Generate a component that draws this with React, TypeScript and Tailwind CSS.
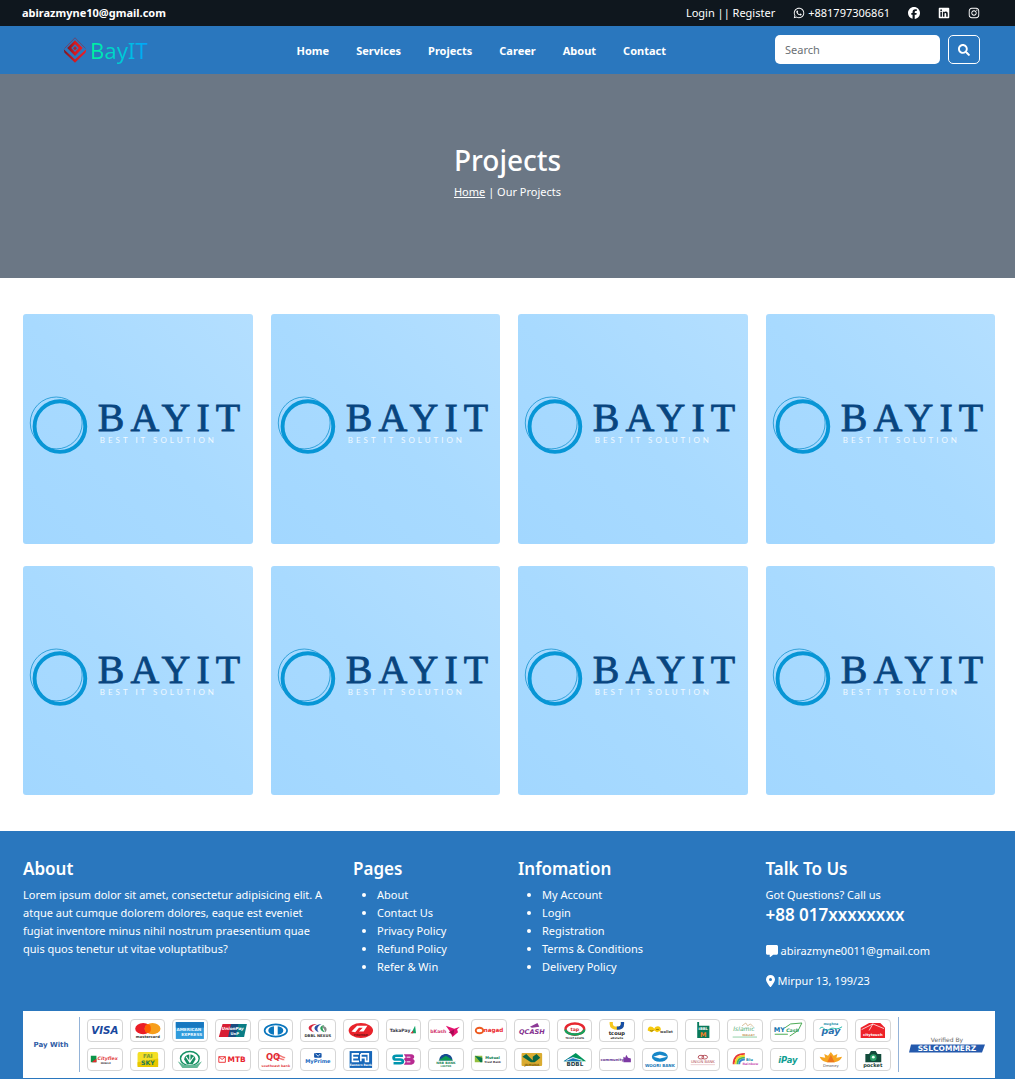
import React from "react";
import { FaInstagram, FaSearch, FaWhatsapp } from "react-icons/fa";
import { FaFacebook, FaLinkedin, FaLocationDot, FaMessage } from "react-icons/fa6";

const navItems = ["Home", "Services", "Projects", "Career", "About", "Contact"];
const pageLinks = ["About", "Contact Us", "Privacy Policy", "Refund Policy", "Refer & Win"];
const infoLinks = ["My Account", "Login", "Registration", "Terms & Conditions", "Delivery Policy"];

function TopBar() {
  return (
    <div className="flex h-[26px] items-center justify-between bg-[#0f171e] pr-[35px] pl-[22px] text-white">
      <a href="#mail" className="text-[11px] font-bold">
        abirazmyne10@gmail.com
      </a>
      <div className="flex items-center gap-[18px] text-[11px]">
        <span>
          <a href="#login">Login</a> || <a href="#register">Register</a>
        </span>
        <a href="#phone" className="flex items-center gap-[3px]">
          <FaWhatsapp className="size-3" />
          +881797306861
        </a>
        <a href="#facebook" aria-label="Facebook">
          <FaFacebook className="size-3" />
        </a>
        <a href="#linkedin" aria-label="LinkedIn">
          <FaLinkedin className="size-3" />
        </a>
        <a href="#instagram" aria-label="Instagram">
          <FaInstagram className="size-3" />
        </a>
      </div>
    </div>
  );
}

function BrandMark() {
  return (
    <svg viewBox="0 0 24 26" className="h-[26px] w-6">
      <defs>
        <linearGradient id="mark" x1="0" y1="0" x2="1" y2="0">
          <stop offset="0" stopColor="#7d1420" />
          <stop offset="0.5" stopColor="#d31b22" />
          <stop offset="1" stopColor="#ee1c24" />
        </linearGradient>
      </defs>
      <path d="M1.5 11.5 12 .8l10.500 10.700" fill="none" stroke="#7a3a5c" strokeWidth=".8" />
      <path d="M12 3.200 19.800 11 12 19 4.200 11Z M12 7.200 8.200 11 12 15 15.800 11Z" fill="url(#mark)" fillRule="evenodd" />
      <path d="M12 9.200 14 11.200 12 13.200 10 11.200Z" fill="#b81c2a" />
      <path d="M.8 12.200 12 22.500 23.200 12.200 22.600 15.600 12 25.800 1.400 15.600Z" fill="url(#mark)" />
    </svg>
  );
}

function NavBar() {
  return (
    <header className="flex h-12 items-center justify-between bg-[#2a77be] pr-[35px] pb-px pl-[63px] text-white">
      <a href="#home" className="flex items-center gap-[3px] pr-10">
        <BrandMark />
        <span className="bg-gradient-to-r from-[#00f59b] to-[#06a3fb] bg-clip-text text-[22px] leading-7 text-transparent">
          BayIT
        </span>
      </a>
      <nav className="flex gap-[27px] pt-[3px] text-[11px] font-bold">
        {navItems.map((item) => (
          <a key={item} href={"#" + item.toLowerCase()}>
            {item}
          </a>
        ))}
      </nav>
      <form className="flex gap-2" onSubmit={(e) => e.preventDefault()}>
        <input
          type="search"
          aria-label="Search"
          placeholder="Search"
          className="h-[29px] w-[165px] rounded-[5px] bg-white px-[10px] text-[11px] text-gray-800 placeholder:text-[#6a7075]"
        />
        <button
          type="submit"
          aria-label="Submit search"
          className="flex h-[29px] w-8 items-center justify-center rounded-[5px] border border-white"
        >
          <FaSearch className="size-3" />
        </button>
      </form>
    </header>
  );
}

function Hero() {
  return (
    <section className="flex h-[204px] items-center justify-center bg-[#6b7785] pb-[10px] text-white">
      <div className="text-center">
        <h1 className="text-[28px] leading-9 font-medium">Projects</h1>
        <p className="mt-[5px] text-[11px] leading-[18px]">
          <a href="#home" className="underline">
            Home
          </a>{" "}
          | Our Projects
        </p>
      </div>
    </section>
  );
}

function ProjectCard() {
  return (
    <a
      href="#project"
      aria-label="BAYIT project"
      className="block overflow-hidden rounded-[3px] bg-gradient-to-tr from-[#a2d7ff] via-[#a8daff] to-[#b4dfff]"
    >
      <svg viewBox="0 0 230 230" className="block h-auto w-full">
        <circle cx="37" cy="112.800" r="25.400" fill="none" stroke="#0796d6" strokeWidth="3.900" />
        <circle cx="33.300" cy="109.200" r="26" fill="none" stroke="#1593cf" strokeWidth=".8" />
        <text
          x="75"
          y="117"
          fontFamily="Liberation Serif, serif"
          fontSize="40"
          letterSpacing="6"
          fill="#08457f"
          stroke="#08457f"
          strokeWidth=".8"
        >
          BAYIT
        </text>
        <text x="77" y="129.500" fontFamily="Lato, sans-serif" fontSize="8" letterSpacing="3" fill="#f0f9ff">
          BEST IT SOLUTION
        </text>
      </svg>
    </a>
  );
}

type LabelProps = {
  x?: number;
  y: number;
  size: number;
  fill: string;
  children: string;
  italic?: boolean;
  bold?: boolean;
};

function Label({ x = 18, y, size, fill, children, italic, bold = true }: LabelProps) {
  return (
    <text
      x={x}
      y={y}
      textAnchor="middle"
      fontFamily="DejaVu Sans, sans-serif"
      fontSize={size}
      fontWeight={bold ? 700 : 400}
      fontStyle={italic ? "italic" : "normal"}
      fill={fill}
    >
      {children}
    </text>
  );
}

const payments: { name: string; art: React.ReactNode }[] = [
  { name: "Visa", art: <Label y={15} size={11} fill="#17479e" italic>VISA</Label> },
  {
    name: "Mastercard",
    art: (
      <>
        <ellipse cx="13" cy="9" rx="8.500" ry="6" fill="#eb1c26" />
        <ellipse cx="23" cy="9" rx="8.500" ry="6" fill="#f79e1b" />
        <ellipse cx="18" cy="9" rx="3.200" ry="4.700" fill="#ff5f00" />
        <Label y={18.500} size={4} fill="#333">mastercard</Label>
      </>
    ),
  },
  {
    name: "American Express",
    art: (
      <>
        <rect x="3" y="2" width="30" height="18" fill="#2f9bdc" />
        <rect x="3" y="2" width="30" height="6" fill="#1878c0" />
        <Label x={17} y={11.500} size={4.500} fill="#e8f6ff">AMERICAN</Label>
        <Label x={20} y={17} size={4.500} fill="#e8f6ff">EXPRESS</Label>
      </>
    ),
  },
  {
    name: "UnionPay",
    art: (
      <>
        <path d="M7 4h11l-3 14H3Z" fill="#d81e34" />
        <path d="M16 4h9l-3 14h-9Z" fill="#1a4b80" />
        <path d="M24 4h9l-3 14h-9Z" fill="#0a7d85" />
        <Label y={10.500} size={4.500} fill="#fff" italic>UnionPay</Label>
        <Label x={20} y={16} size={4} fill="#fff">UnP</Label>
      </>
    ),
  },
  {
    name: "Diners Club",
    art: (
      <>
        <ellipse cx="18" cy="11" rx="12" ry="6.500" fill="#fff" stroke="#0a76bd" strokeWidth="1.800" />
        <path d="M16 6.500v9c-8-.5-8-8.500 0-9Zm4 0v9c8-.5 8-8.500 0-9Z" fill="#0a76bd" />
      </>
    ),
  },
  {
    name: "DBBL Nexus",
    art: (
      <>
        <path d="M17 4C7 4 5 10 14 13 9 9 11 6 17 4Z" fill="#d7263d" />
        <path d="M22 4c-9 1-10 6-3 9-3-4-1-7 3-9Z" fill="#2d4ea2" />
        <path d="M25 5c-6 1-6 6 1 8-3-3-4-5-1-8Z" fill="#29a05a" />
        <path d="M22 6c5 0 7 4 4 7-1-3-2-5-4-7Z" fill="#888" />
        <Label y={18} size={4} fill="#333">DBBL NEXUS</Label>
      </>
    ),
  },
  {
    name: "Prime",
    art: (
      <>
        <ellipse cx="18" cy="11" rx="13" ry="8" fill="#e9232b" />
        <path d="m8 12 6-6h11l-4 6h-5l4-4h-4l-4 5Z" fill="#fff" />
        <Label y={16.500} size={3} fill="#711">PREMIER</Label>
      </>
    ),
  },
  {
    name: "TakaPay",
    art: (
      <>
        <Label x={14} y={13} size={4.800} fill="#334">TakaPay</Label>
        <path d="m26 14 4-8 1 8Z" fill="#10a368" />
        <path d="m25 14 3-3v3Z" fill="#d9313e" />
      </>
    ),
  },
  {
    name: "bKash",
    art: (
      <>
        <Label x={10} y={13.500} size={5} fill="#d33a72">bKash</Label>
        <path d="m18 6 9 3 6-2-3 3 1 3-6 5-2-5Z" fill="#e2136e" />
        <path d="m21 13 6-3-1 6Z" fill="#a40c52" />
      </>
    ),
  },
  {
    name: "Nagad",
    art: (
      <>
        <ellipse cx="8" cy="11" rx="4" ry="3" fill="none" stroke="#ed5b20" strokeWidth="2" />
        <Label x={23} y={13} size={6} fill="#ec2429">nagad</Label>
      </>
    ),
  },
  {
    name: "QCash",
    art: (
      <>
        <path d="m16 7 8-4 2 4-8 1Z" fill="#8c3a96" />
        <Label y={14.500} size={7} fill="#84318f" italic>QCASH</Label>
      </>
    ),
  },
  {
    name: "Tap",
    art: (
      <>
        <ellipse cx="18" cy="9.500" rx="10" ry="6" fill="none" stroke="#e72630" strokeWidth="2.500" />
        <path d="M8 10c0 7 20 7 20 0" fill="none" stroke="#13a35c" strokeWidth="2.500" />
        <Label y={11.500} size={5} fill="#d8292f">tap</Label>
        <Label y={20} size={2.500} fill="#333">TRUST AXIATA</Label>
      </>
    ),
  },
  {
    name: "Upay",
    art: (
      <>
        <path d="M12 2v2c0 6 12 6 12 0V2" fill="none" stroke="#f7c81e" strokeWidth="3.500" />
        <path d="M18 8.500c4 0 6-2 6-4.500V2" fill="none" stroke="#174ea6" strokeWidth="3.500" />
        <Label y={15.500} size={5.500} fill="#222">tcoup</Label>
        <Label y={20} size={3} fill="#333">eKstella</Label>
      </>
    ),
  },
  {
    name: "Ok Wallet",
    art: (
      <>
        <path d="M5 11c0-6 5-5 7-2 2-4 8-3 7 2l-4 2-3-2-3 2Z" fill="#f6c90e" />
        <path d="M8 10.500a1.500 1.200 0 1 0 3 0M14 10h3" fill="none" stroke="#5a4b00" strokeWidth=".6" />
        <Label x={25} y={14} size={4} fill="#444">wallet</Label>
      </>
    ),
  },
  {
    name: "IBBL mCash",
    art: (
      <>
        <path d="M12 6h13v13H12ZM12 2h2v5h-2Z" fill="#08795b" />
        <Label x={18.500} y={10.500} size={4} fill="#fff">iBBL</Label>
        <Label x={18.500} y={17.500} size={7} fill="#f48028">M</Label>
      </>
    ),
  },
  {
    name: "Islamic Wallet",
    art: (
      <>
        <path d="m15 6 4-3 2 3 3-2 3 3" fill="none" stroke="#caa26b" strokeWidth=".7" />
        <Label x={17} y={12} size={6.500} fill="#52ad75" italic bold={false}>Islamic</Label>
        <Label x={22} y={16.500} size={3} fill="#c79c67">WALLET</Label>
        <path d="M5 18h26" stroke="#70c18d" strokeWidth=".8" />
      </>
    ),
  },
  {
    name: "MYCash",
    art: (
      <>
        <Label x={9} y={12.500} size={7} fill="#1173ae">MY</Label>
        <path d="m15 8 6-4 12-1-4 8-9 6" fill="none" stroke="#41a64b" strokeWidth="1" />
        <Label x={23} y={13} size={5} fill="#28995b" italic>Cash</Label>
        <path d="M4 15h14" stroke="#41a64b" strokeWidth="1" />
      </>
    ),
  },
  {
    name: "Meghna Pay",
    art: (
      <>
        <Label x={18} y={5.500} size={3.500} fill="#1a8ba5">meghna</Label>
        <Label x={18} y={15} size={10} fill="#2a6fae" italic>pay</Label>
        <path d="M6 9c5-5 5 5 10 1s7 2 14-3" fill="none" stroke="#1ab4a3" strokeWidth="1" />
      </>
    ),
  },
  {
    name: "CityTouch",
    art: (
      <>
        <path d="m5 8 9-5h12l5 5v11H5Z" fill="#ed2229" />
        <path d="m6 10 12-6 12 5M14 11l4-7" fill="none" stroke="#fff" strokeWidth=".8" />
        <Label y={17} size={4} fill="#fff">citytouch</Label>
      </>
    ),
  },
  {
    name: "Cityflex",
    art: (
      <>
        <path d="M3 7h6v7H3Z" fill="#0b9549" />
        <path d="m4 14 5-4v4Z" fill="#e62b2e" />
        <Label x={21} y={12} size={5} fill="#e23b3e" italic>Cityflex</Label>
        <Label x={19} y={16} size={2.500} fill="#333">MOBILE</Label>
      </>
    ),
  },
  {
    name: "FAI SKY",
    art: (
      <>
        <rect x="7" y="3" width="22" height="16" rx="2" fill="#f4df25" />
        <path d="m7 14 22-4v9H7Z" fill="#e8c700" />
        <Label y={9.500} size={6} fill="#7b9b34">FAI</Label>
        <Label y={17} size={6.500} fill="#1a7a55">SKY</Label>
      </>
    ),
  },
  {
    name: "Islami Bank",
    art: (
      <>
        <ellipse cx="18" cy="10" rx="10" ry="7.500" fill="none" stroke="#159265" strokeWidth="1.500" />
        <path d="M12 11c0-7 12-7 12 0l-3 5h-6Z" fill="#168d61" />
        <path d="M18 5v8m-4-5 4 6 4-6" fill="none" stroke="#fff" strokeWidth="1.200" />
        <path d="m5 13 7 4h12l7-4-5 7H10Z" fill="#65b897" />
      </>
    ),
  },
  {
    name: "MTB",
    art: (
      <>
        <path d="M3 8h7v6H3Zm0 0 3.500 3L10 8" fill="none" stroke="#ec3036" strokeWidth="1" />
        <Label x={22} y={14} size={8} fill="#e82430">MTB</Label>
      </>
    ),
  },
  {
    name: "Southeast Bank",
    art: (
      <>
        <path d="M18 7c4-2 7 2 10 2M18 10c4-2 7 2 9 1" fill="none" stroke="#f27a77" strokeWidth="1.500" />
        <Label x={15} y={12} size={9} fill="#e22b33">QQ</Label>
        <Label y={18.500} size={3.500} fill="#e24045">southeast bank</Label>
      </>
    ),
  },
  {
    name: "MyPrime",
    art: (
      <>
        <rect x="14" y="4" width="8" height="5" rx="1" fill="#1455a9" />
        <path d="m15.500 5 3 2.500 2-2.500" fill="none" stroke="#fff" strokeWidth=".8" />
        <Label y={15} size={5.500} fill="#1769bf">MyPrime</Label>
      </>
    ),
  },
  {
    name: "Eastern Bank",
    art: (
      <>
        <rect x="6" y="2" width="24" height="18" fill="#1767b9" />
        <path d="M16 5H9v8h7M9 9h6M18 5v8M18 5h8v8h-3V9h-5" fill="none" stroke="#fff" strokeWidth="1.700" />
        <Label y={18} size={3.200} fill="#fff">Eastern Bank</Label>
      </>
    ),
  },
  {
    name: "SB",
    art: (
      <>
        <path d="M17 7H10c-4 0-4 4 0 4h4c4 0 4 4 0 4H7" fill="none" stroke="#0095ae" strokeWidth="2.800" />
        <path
          d="M18 5.500h8c4 0 4 5 1 5 4 0 3 6-1 6h-8l2-3-2-3 2-2Z"
          fill="#b82b91"
        />
        <path d="M21 8.500h4M21 13.500h4" stroke="#fff" strokeWidth="1" />
      </>
    ),
  },
  {
    name: "NRB Bank",
    art: (
      <>
        <path d="M11 12c0-9 14-9 14 0Z" fill="#164b91" />
        <path d="m10 12 8-5 8 5Z" fill="#0b9a53" />
        <Label y={15.500} size={3.500} fill="#138352">NRB BANK</Label>
        <Label y={19} size={2.500} fill="#138352">LIMITED</Label>
      </>
    ),
  },
  {
    name: "Mutual Trust Bank",
    art: (
      <>
        <path d="M3 7h8v7H3Z" fill="#94bf3e" />
        <path d="m3 7 6 7h2V9Z" fill="#08774d" />
        <Label x={22} y={10.500} size={4} fill="#08774d">Mutual</Label>
        <Label x={22} y={15} size={3} fill="#333">Trust Bank</Label>
      </>
    ),
  },
  {
    name: "Jamuna Bank",
    art: (
      <>
        <rect x="7" y="4" width="22" height="14" rx="1" fill="#daac31" />
        <path d="m12 5 7 7V8l4-3 4 4-6 5h-4L8 8Z" fill="#0b6745" />
        <Label y={17.500} size={3.500} fill="#805d0d">JAMUNA</Label>
      </>
    ),
  },
  {
    name: "BDBL",
    art: (
      <>
        <path d="m6 13 13-9 11 9Z" fill="#00945b" />
        <path d="m6 13 8-5 6 2 5 3Z" fill="#1874b8" />
        <path d="m9 12 7-3 10 3" stroke="#fff" strokeWidth="1" fill="none" />
        <Label y={18} size={6} fill="#243c46">BDBL</Label>
      </>
    ),
  },
  {
    name: "Community Bank",
    art: (
      <>
        <Label x={13} y={13} size={4} fill="#653692">community</Label>
        <path d="m25 8 2 1 1-3 2 3 3 1v4h-8Z" fill="#7d3aa3" />
      </>
    ),
  },
  {
    name: "Woori Bank",
    art: (
      <>
        <ellipse cx="18" cy="8" rx="8.500" ry="5.500" fill="#1687c8" />
        <path d="m11 8 7-2 8 2-8 2Z" fill="#fff" />
        <Label y={18.500} size={4.300} fill="#1678b7">WOORI BANK</Label>
      </>
    ),
  },
  {
    name: "Union Bank",
    art: (
      <>
        <ellipse cx="16" cy="8.500" rx="3" ry="2" fill="none" stroke="#b34a55" strokeWidth="1" />
        <ellipse cx="20" cy="8.500" rx="3" ry="2" fill="none" stroke="#b34a55" strokeWidth="1" />
        <Label y={14.500} size={4} fill="#b34a55" bold={false}>UNION BANK</Label>
        <path d="M5 16.500h26" stroke="#d99ba0" strokeWidth=".5" />
      </>
    ),
  },
  {
    name: "Rainbow",
    art: (
      <>
        <path d="M6 16C6 8 11 5 18 5" fill="none" stroke="#e73939" strokeWidth="2" />
        <path d="M8 16c0-6 4-9 10-9" fill="none" stroke="#f5d327" strokeWidth="2" />
        <path d="M10 16c0-5 3-7 8-7" fill="none" stroke="#4bb85a" strokeWidth="2" />
        <path d="M12 16c0-3 2-5 6-5" fill="none" stroke="#3688d4" strokeWidth="2" />
        <Label x={23} y={12.500} size={4} fill="#1584a8">Blu</Label>
        <Label x={24} y={17} size={3.500} fill="#c74fb1">Rainbow</Label>
      </>
    ),
  },
  { name: "iPay", art: <Label y={14.500} size={9} fill="#109e92" italic>iPay</Label> },
  {
    name: "Dmoney",
    art: (
      <>
        <path d="m18 3 3 4 4-2-1 4 6-1c-2 5-6 6-12 6S8 13 6 8l6 1-1-4 4 2Z" fill="#f6a621" />
        <path d="m18 6 4 8h-8Z" fill="#ee761e" />
        <Label y={18.500} size={4} fill="#555" bold={false}>Dmoney</Label>
      </>
    ),
  },
  {
    name: "Pocket",
    art: (
      <>
        <path d="M10 5h4l2-3h5l2 3h4v9H10Z" fill="#124c3c" />
        <circle cx="18.500" cy="9" r="3.500" fill="#28a068" />
        <circle cx="18.500" cy="8.500" r="1.500" fill="#e7fff2" />
        <Label y={18.500} size={5.500} fill="#173e36">pocket</Label>
      </>
    ),
  },
];

function PaymentBanner() {
  return (
    <div className="flex h-[67px] items-stretch bg-white py-[6px]">
      <p className="flex w-14 items-center justify-center text-[7px] font-bold text-[#315da6] [font-family:'DejaVu_Sans',sans-serif]">
        Pay With
      </p>
      <div className="flex flex-1 items-center border-x border-[#94b3d8] px-[7px]">
        <ul className="grid flex-1 grid-cols-[repeat(19,minmax(0,1fr))] gap-x-[7px] gap-y-[6px]">
          {payments.map((p) => (
            <li key={p.name} className="h-[23px] overflow-hidden rounded-[4px] border border-[#d6d6d6] bg-white">
              <svg viewBox="0 0 36 22" className="block h-full w-full" role="img" aria-label={p.name}>
                {p.art}
              </svg>
            </li>
          ))}
        </ul>
      </div>
      <div className="flex w-24 flex-col items-center justify-center text-[6px] leading-[8px] text-[#666] [font-family:'DejaVu_Sans',sans-serif]">
        <span>Verified By</span>
        <svg viewBox="0 0 76 9" className="h-[9px] w-[76px]" role="img" aria-label="SSLCOMMERZ">
          <path d="M2 .5h74l-3 8H0Z" fill="#2459ac" />
          <Label x={38} y={7.200} size={7.500} fill="#fff">SSLCOMMERZ</Label>
        </svg>
      </div>
    </div>
  );
}

function LinkList({ items }: { items: string[] }) {
  return (
    <ul className="list-disc pl-6">
      {items.map((item) => (
        <li key={item}>
          <a href="#link">{item}</a>
        </li>
      ))}
    </ul>
  );
}

function Footer() {
  const heading = "mb-[6px] text-[17px] leading-[22px] font-semibold";
  return (
    <footer className="bg-[#2a77be] pt-[27px] pr-5 pb-px pl-[23px] text-[11px] leading-[18px] text-white">
      <div className="grid grid-cols-12 gap-x-[18px]">
        <section className="col-span-4">
          <h2 className={heading}>About</h2>
          <p className="pr-2">
            Lorem ipsum dolor sit amet, consectetur adipisicing elit. A atque aut cumque dolorem dolores, eaque est
            eveniet fugiat inventore minus nihil nostrum praesentium quae quis quos tenetur ut vitae voluptatibus?
          </p>
        </section>
        <section className="col-span-2">
          <h2 className={heading}>Pages</h2>
          <LinkList items={pageLinks} />
        </section>
        <section className="col-span-3">
          <h2 className={heading}>Infomation</h2>
          <LinkList items={infoLinks} />
        </section>
        <section className="col-span-3">
          <h2 className={heading}>Talk To Us</h2>
          <p>Got Questions? Call us</p>
          <p className="text-[17px] leading-[22px] font-semibold">+88 017xxxxxxxx</p>
          <p className="mt-4 flex items-center gap-[3px]">
            <FaMessage className="size-3" />
            abirazmyne0011@gmail.com
          </p>
          <p className="mt-3 flex items-center gap-[3px]">
            <FaLocationDot className="h-3 w-[9px]" />
            Mirpur 13, 199/23
          </p>
        </section>
      </div>
      <div className="mt-[21px]">
        <PaymentBanner />
      </div>
    </footer>
  );
}

export default function App() {
  return (
    <div className="bg-white [font-family:'Noto_Sans',sans-serif]">
      <TopBar />
      <NavBar />
      <Hero />
      <main className="grid grid-cols-4 gap-x-[18px] gap-y-[22px] py-9 pr-5 pl-[23px]">
        {Array.from({ length: 8 }, (_, i) => (
          <ProjectCard key={i} />
        ))}
      </main>
      <Footer />
    </div>
  );
}
